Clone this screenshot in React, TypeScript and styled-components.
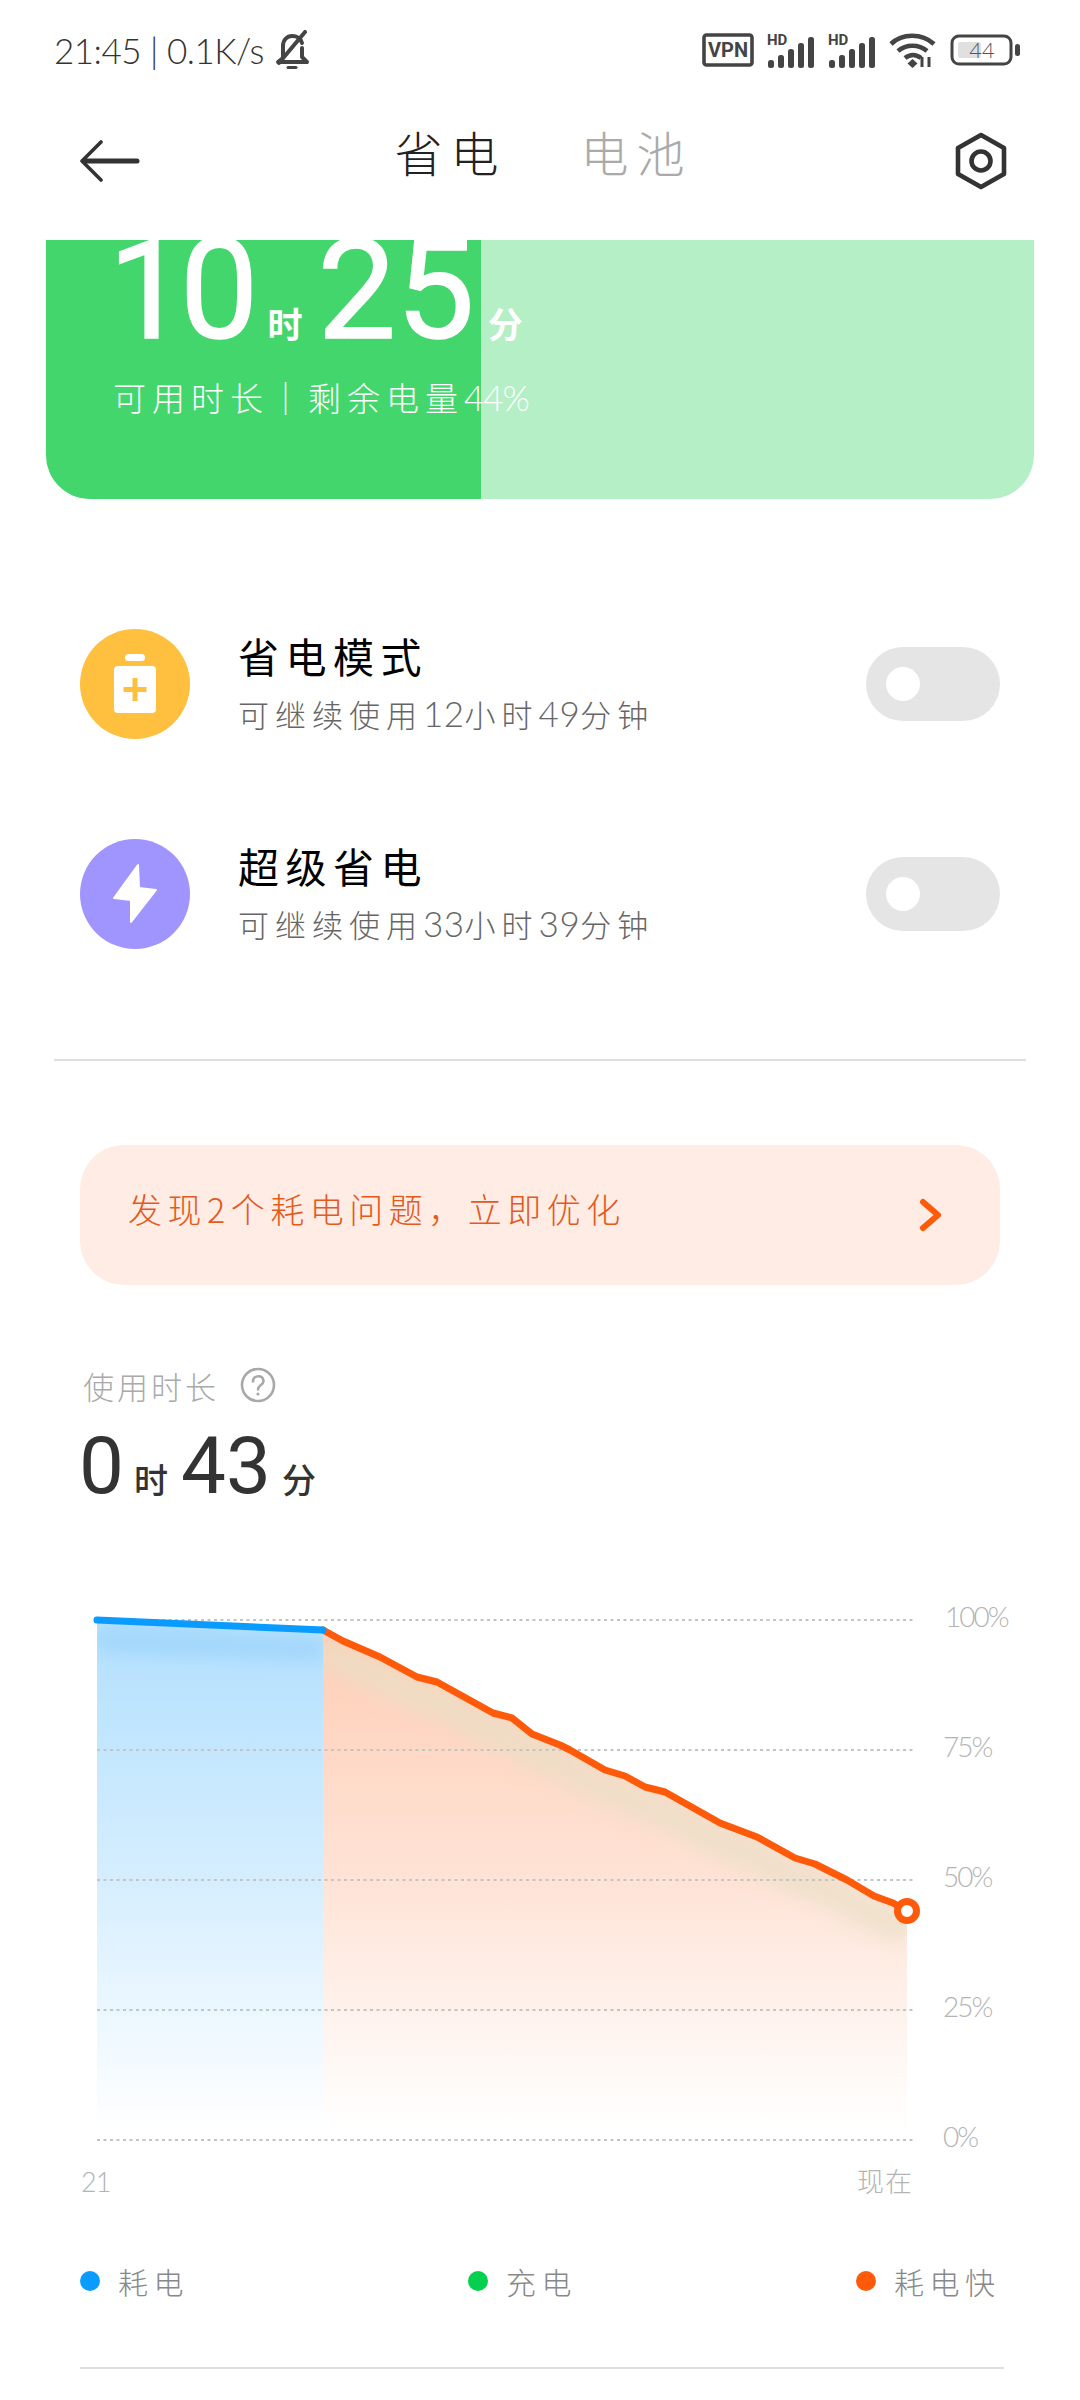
import React from 'react';
import styled, { createGlobalStyle } from 'styled-components';

const CJK = '"Noto Sans CJK SC", "Noto Sans", sans-serif';
const NUM = 'Roboto, "Noto Sans CJK SC", sans-serif';
const THIN = 'Lato, Roboto, "Noto Sans CJK SC", sans-serif';

const GlobalStyle = createGlobalStyle`
  html, body {
    margin: 0;
    padding: 0;
    background: #fff;
  }
  body {
    font-family: ${CJK};
    width: 1080px;
    height: 2400px;
    overflow: hidden;
  }
`;

const Page = styled.div`
  width: 1080px;
  height: 2400px;
  background: #fff;
  overflow: hidden;
`;

const StatusBar = styled.div`
  height: 100px;
  padding: 0 60px 0 54px;
  display: flex;
  align-items: center;
  justify-content: space-between;
  box-sizing: border-box;
`;

const StatusLeft = styled.div`
  display: flex;
  align-items: center;
  gap: 10px;
  font-family: ${THIN};
  font-weight: 300;
  font-size: 35px;
  letter-spacing: -0.5px;
  color: #333;
`;

const StatusRight = styled.div`
  display: flex;
  align-items: center;
  gap: 13px;
`;

const Header = styled.div`
  height: 140px;
  display: grid;
  grid-template-columns: 1fr auto 1fr;
  align-items: center;
  padding: 0 73px 18px 80px;
  box-sizing: border-box;
`;

const Tabs = styled.div`
  display: flex;
  gap: 74px;
  margin-top: -20px;
`;

const Tab = styled.div<{ $active?: boolean }>`
  font-size: 48px;
  font-weight: 300;
  letter-spacing: 8px;
  line-height: 56px;
  color: ${p => (p.$active ? '#222' : '#aaa')};
`;

const HeaderEnd = styled.div`
  display: flex;
  justify-content: flex-end;
`;

const Card = styled.div`
  position: relative;
  height: 259px;
  margin: 0 46px;
  background: #b5efc6;
  border-radius: 0 0 44px 44px;
  overflow: hidden;
`;

const CardFill = styled.div`
  position: absolute;
  left: 0;
  top: 0;
  bottom: 0;
  background: #43d66d;
`;

const CardBody = styled.div`
  position: relative;
  padding: 0 0 0 62px;
  color: #fff;
`;

const BigRow = styled.div`
  display: flex;
  align-items: baseline;
  height: 100px;
  line-height: 100px;
  white-space: nowrap;
`;

const BigNum = styled.span<{ $spacing: number }>`
  font-family: ${NUM};
  font-size: 140px;
  font-weight: 400;
  -webkit-text-stroke: 1.5px #fff;
  letter-spacing: ${p => p.$spacing}px;
`;

const BigUnit = styled.span<{ $left: number; $right: number }>`
  font-size: 35px;
  font-weight: 700;
  margin: 0 ${p => p.$right}px 0 ${p => p.$left}px;
`;

const CardSub = styled.div`
  margin: 35px 0 0 5px;
  font-size: 33px;
  font-weight: 300;
  letter-spacing: 6px;
  line-height: 44px;
  white-space: nowrap;
`;

const Tight = styled.span`
  font-family: ${THIN};
  font-weight: 300;
  font-size: 35px;
  letter-spacing: -1px;
`;

const Modes = styled.div`
  margin-top: 80px;
  padding: 0 80px;
`;

const ModeRow = styled.div`
  height: 210px;
  display: flex;
  align-items: center;
`;

const ModeIcon = styled.div<{ $bg: string }>`
  width: 110px;
  height: 110px;
  border-radius: 50%;
  background: ${p => p.$bg};
  display: flex;
  align-items: center;
  justify-content: center;
  flex: none;
`;

const ModeText = styled.div`
  margin: -4px 0 0 48px;
  flex: 1;
`;

const ModeTitle = styled.div`
  font-size: 41px;
  font-weight: 400;
  letter-spacing: 6.5px;
  line-height: 50px;
  color: #000;
`;

const ModeSub = styled.div`
  margin-top: 13px;
  font-size: 31px;
  font-weight: 300;
  letter-spacing: 6px;
  line-height: 40px;
  color: #666;
`;

const SubNum = styled.span`
  font-family: ${THIN};
  font-weight: 300;
  font-size: 35px;
  letter-spacing: 0.5px;
`;

const Toggle = styled.div`
  width: 134px;
  height: 74px;
  border-radius: 37px;
  background: #e5e5e5;
  display: flex;
  align-items: center;
  padding-left: 20px;
  box-sizing: border-box;
`;

const ToggleThumb = styled.div`
  width: 34px;
  height: 34px;
  border-radius: 50%;
  background: #fff;
`;

const Divider = styled.div<{ $top: number; $left: number; $right: number }>`
  height: 2px;
  margin: ${p => p.$top}px ${p => p.$right}px 0 ${p => p.$left}px;
  background: #dedede;
`;

const Banner = styled.div`
  margin: 84px 80px 0;
  height: 140px;
  border-radius: 44px;
  background: #ffede5;
  display: flex;
  align-items: center;
  justify-content: space-between;
  padding: 0 57px 0 48px;
  box-sizing: border-box;
`;

const BannerText = styled.div`
  font-size: 34px;
  font-weight: 300;
  letter-spacing: 5.5px;
  color: #e4591c;
  margin-top: -14px;
`;

const Usage = styled.div`
  margin-top: 82px;
  padding: 0 83px;
`;

const UsageLabel = styled.div`
  display: flex;
  align-items: center;
  gap: 21px;
  height: 36px;
  font-size: 31px;
  font-weight: 300;
  letter-spacing: 3px;
  color: #aaa;
`;

const UsageValue = styled.div`
  display: flex;
  align-items: baseline;
  margin: 23px 0 0 -4px;
  height: 80px;
  line-height: 80px;
  color: #333;
`;

const UsageNum = styled.span`
  font-family: ${NUM};
  font-size: 80px;
  font-weight: 400;
`;

const UsageUnit = styled.span<{ $left: number; $right: number }>`
  font-size: 34px;
  font-weight: 500;
  margin: 0 ${p => p.$right}px 0 ${p => p.$left}px;
`;

const ChartWrap = styled.div`
  margin-top: 94px;
  height: 600px;
`;

const Legend = styled.div`
  margin-top: 59px;
  padding-left: 80px;
  height: 40px;
  display: grid;
  grid-template-columns: repeat(3, 388px);
`;

const LegendItem = styled.div`
  display: flex;
  align-items: center;
  gap: 18px;
  font-size: 30px;
  font-weight: 300;
  letter-spacing: 5.5px;
  color: #888;
`;

const LegendDot = styled.span<{ $color: string }>`
  width: 20px;
  height: 20px;
  border-radius: 50%;
  background: ${p => p.$color};
  flex: none;
`;

const BellOff = () => (
  <svg width="36" height="40" viewBox="0 0 36 40" fill="none" stroke="#444" strokeWidth="4" strokeLinecap="round" strokeLinejoin="round">
    <path d="M9 27V16C9 10 13 6 18 6s9 3 10 7" />
    <path d="M28 18v9l5 5H4l5-4" />
    <path d="M31 2L5 33" />
    <path d="M14 37.5h8" strokeWidth="3" />
  </svg>
);

const VpnIcon = () => (
  <svg width="52" height="34" viewBox="0 0 52 34">
    <rect x="2" y="2" width="48" height="30" rx="2.5" fill="none" stroke="#444" strokeWidth="3.6" />
    <text x="26" y="24" textAnchor="middle" fontFamily="Roboto, sans-serif" fontWeight="700" fontSize="20" fill="#444">VPN</text>
  </svg>
);

const SignalIcon = () => (
  <svg width="48" height="36" viewBox="0 0 48 36">
    <text x="0" y="13" fontFamily="Roboto, sans-serif" fontWeight="700" fontSize="15" fill="#444">HD</text>
    <rect x="1" y="28" width="6" height="8" rx="2.5" fill="#444" />
    <rect x="11" y="23" width="6" height="13" rx="2.5" fill="#444" />
    <rect x="21" y="17" width="6" height="19" rx="2.5" fill="#444" />
    <rect x="31" y="11" width="6" height="25" rx="2.5" fill="#444" />
    <rect x="41" y="5" width="6" height="31" rx="2.5" fill="#444" />
  </svg>
);

const WifiIcon = () => (
  <svg width="48" height="36" viewBox="0 0 48 36" fill="none" stroke="#444" strokeWidth="4.6">
    <path d="M2 12C13 1 33 1 45 12" />
    <path d="M9 19c8-7 21-7 29 0" />
    <path d="M16 26c5-4 11-4 16 0" />
    <path d="M23.5 27l5 4.5-5 4.5-5-4.5z" fill="#444" stroke="none" />
    <path d="M33 25v10M40 25v10" strokeWidth="3" />
  </svg>
);

const BatteryIcon = () => (
  <svg width="70" height="32" viewBox="0 0 70 32">
    <rect x="2" y="2" width="59" height="28" rx="7" fill="none" stroke="#444" strokeWidth="3" />
    <rect x="8" y="8" width="23" height="16" rx="2" fill="#e0e0e0" />
    <rect x="65" y="10" width="5" height="12" rx="2.5" fill="#444" />
    <text x="32" y="24" textAnchor="middle" fontFamily="Lato, Roboto, sans-serif" fontWeight="300" fontSize="22" fill="#555">44</text>
  </svg>
);

const BackIcon = () => (
  <svg width="60" height="44" viewBox="0 0 60 44" fill="none" stroke="#333" strokeLinecap="round" strokeLinejoin="round">
    <path d="M21 3L2 22l19 19" strokeWidth="3.6" />
    <path d="M4 22h53" strokeWidth="5" />
  </svg>
);

const SettingsIcon = () => (
  <svg width="52" height="58" viewBox="0 0 52 58" fill="none" stroke="#333" strokeWidth="4.6" strokeLinejoin="round">
    <path d="M26 3l23 13v26L26 55 3 42V16z" />
    <circle cx="26" cy="29" r="9.5" />
  </svg>
);

const BottleIcon = () => (
  <svg width="44" height="60" viewBox="0 0 44 60">
    <rect x="12" y="0" width="20" height="7" rx="3.5" fill="#fff" />
    <rect x="1" y="12" width="42" height="47" rx="4" fill="#fff" />
    <path d="M22 24v23M10.5 35.5h23" stroke="#fec03e" strokeWidth="5" />
  </svg>
);

const BoltIcon = () => (
  <svg width="46" height="60" viewBox="0 0 46 60">
    <path d="M26 1L2 34l17 2v22l25-32-17-2z" fill="#fff" stroke="#fff" strokeWidth="2" strokeLinejoin="round" />
  </svg>
);

const Chevron = () => (
  <svg width="24" height="34" viewBox="0 0 24 34" fill="none" stroke="#ff5a0a" strokeWidth="6" strokeLinecap="round" strokeLinejoin="round">
    <path d="M4 4l15 13L4 30" />
  </svg>
);

const HelpIcon = () => (
  <svg width="36" height="36" viewBox="0 0 36 36" fill="none" stroke="#a8a8a8" strokeWidth="2.6">
    <circle cx="18" cy="18" r="16" />
    <path d="M13 14.5c0-7 10.5-7 10.5-.5 0 4-5.5 4-5.5 8.5" strokeLinecap="round" />
    <circle cx="18" cy="27" r="1.6" fill="#a8a8a8" stroke="none" />
  </svg>
);

const BLUE_LINE: [number, number][] = [[97, 1620], [323, 1630]];
const ORANGE_LINE: [number, number][] = [
  [323, 1630], [343, 1641], [380, 1657], [417, 1677], [437, 1682], [493, 1713], [512, 1718],
  [532, 1734], [560, 1745], [570, 1750], [605, 1770], [625, 1776], [645, 1787], [665, 1792],
  [720, 1823], [757, 1837], [795, 1858], [815, 1864], [847, 1880], [874, 1896], [893, 1903], [907, 1911],
];
const toPts = (l: [number, number][]) => l.map(p => p.join(',')).join(' ');
const GRID: { y: number; label: string; x: number }[] = [
  { y: 1620, label: '100%', x: 945 },
  { y: 1750, label: '75%', x: 943 },
  { y: 1880, label: '50%', x: 943 },
  { y: 2010, label: '25%', x: 943 },
  { y: 2140, label: '0%', x: 943 },
];

const Chart = () => (
  <svg width="1080" height="600" viewBox="0 1600 1080 600" style={{ display: 'block' }}>
    <defs>
      <linearGradient id="blueFill" gradientUnits="userSpaceOnUse" x1="0" y1="1630" x2="0" y2="2130">
        <stop offset="0" stopColor="#b4e0fe" />
        <stop offset="0.5" stopColor="#d5eeff" />
        <stop offset="1" stopColor="#ffffff" />
      </linearGradient>
      <linearGradient id="orangeFill" gradientUnits="userSpaceOnUse" x1="0" y1="1630" x2="0" y2="2130">
        <stop offset="0" stopColor="#ffceb6" />
        <stop offset="0.5" stopColor="#fee3d6" />
        <stop offset="1" stopColor="#ffffff" />
      </linearGradient>
      <clipPath id="blueClip">
        <polygon points={`${toPts(BLUE_LINE)} 323,2140 97,2140`} />
      </clipPath>
      <clipPath id="orangeClip">
        <polygon points={`${toPts(ORANGE_LINE)} 907,2140 323,2140`} />
      </clipPath>
      <filter id="soft" filterUnits="userSpaceOnUse" x="0" y="1600" width="1080" height="600">
        <feGaussianBlur stdDeviation="9" />
      </filter>
    </defs>
    <rect x="97" y="1620" width="226" height="520" fill="url(#blueFill)" clipPath="url(#blueClip)" />
    <rect x="323" y="1620" width="584" height="520" fill="url(#orangeFill)" clipPath="url(#orangeClip)" />
    <g clipPath="url(#blueClip)">
      <polyline points="97,1640 323,1650" fill="none" stroke="#a0d6fa" strokeWidth="22" filter="url(#soft)" />
    </g>
    <g clipPath="url(#orangeClip)">
      <polyline
        points={toPts(ORANGE_LINE)}
        transform="translate(0 20)"
        fill="none"
        stroke="#e8dfc6"
        strokeWidth="30"
        opacity="0.7"
        filter="url(#soft)"
      />
    </g>
    {GRID.map(g => (
      <line key={g.y} x1="97" x2="915" y1={g.y} y2={g.y} stroke="#c4c4c4" strokeWidth="2" strokeDasharray="3 3.5" />
    ))}
    {GRID.map(g => (
      <text key={g.label} x={g.x} y={g.y + 7} fontFamily={THIN} fontWeight="300" fontSize="28" fill="#b4b4b4" letterSpacing="-2">
        {g.label}
      </text>
    ))}
    <text x="81" y="2192" fontFamily={THIN} fontWeight="300" fontSize="27" fill="#b4b4b4" letterSpacing="-1">21</text>
    <text x="857" y="2192" fontFamily={CJK} fontWeight="300" fontSize="27" fill="#b4b4b4" letterSpacing="1">现在</text>
    <polyline points={toPts(ORANGE_LINE)} fill="none" stroke="#ff5a0a" strokeWidth="7" strokeLinejoin="round" strokeLinecap="round" />
    <polyline points={toPts(BLUE_LINE)} fill="none" stroke="#0a9bff" strokeWidth="7" strokeLinecap="round" />
    <circle cx="907" cy="1911" r="9.5" fill="#fff" stroke="#ff5a0a" strokeWidth="7" />
  </svg>
);

const MODES = [
  { title: '省电模式', lead: '可继续使用', hours: '12', mins: '49', bg: '#fec03e', icon: <BottleIcon /> },
  { title: '超级省电', lead: '可继续使用', hours: '33', mins: '39', bg: '#a094ff', icon: <BoltIcon /> },
];

const LEGEND = [
  { label: '耗电', color: '#0a9bff' },
  { label: '充电', color: '#05cf4e' },
  { label: '耗电快', color: '#ff5a0a' },
];

const batteryLevel = 44;

export default function App() {
  return (
    <Page>
      <GlobalStyle />
      <StatusBar>
        <StatusLeft>
          <span>21:45 | 0.1K/s</span>
          <BellOff />
        </StatusLeft>
        <StatusRight>
          <VpnIcon />
          <SignalIcon />
          <SignalIcon />
          <WifiIcon />
          <BatteryIcon />
        </StatusRight>
      </StatusBar>

      <Header>
        <BackIcon />
        <Tabs>
          <Tab $active>省电</Tab>
          <Tab>电池</Tab>
        </Tabs>
        <HeaderEnd>
          <SettingsIcon />
        </HeaderEnd>
      </Header>

      <Card>
        <CardFill style={{ width: `${batteryLevel}%` }} />
        <CardBody>
          <BigRow>
            <BigNum $spacing={-7}>10</BigNum>
            <BigUnit $left={16} $right={15}>时</BigUnit>
            <BigNum $spacing={0}>25</BigNum>
            <BigUnit $left={13} $right={0}>分</BigUnit>
          </BigRow>
          <CardSub>
            可用时长｜剩余电量<Tight>{batteryLevel}%</Tight>
          </CardSub>
        </CardBody>
      </Card>

      <Modes>
        {MODES.map(m => (
          <ModeRow key={m.title}>
            <ModeIcon $bg={m.bg}>{m.icon}</ModeIcon>
            <ModeText>
              <ModeTitle>{m.title}</ModeTitle>
              <ModeSub>
                {m.lead}
                <SubNum>{m.hours}</SubNum>小时<SubNum>{m.mins}</SubNum>分钟
              </ModeSub>
            </ModeText>
            <Toggle>
              <ToggleThumb />
            </Toggle>
          </ModeRow>
        ))}
      </Modes>

      <Divider $top={60} $left={54} $right={54} />

      <Banner>
        <BannerText>发现2个耗电问题，立即优化</BannerText>
        <Chevron />
      </Banner>

      <Usage>
        <UsageLabel>
          使用时长
          <HelpIcon />
        </UsageLabel>
        <UsageValue>
          <UsageNum>0</UsageNum>
          <UsageUnit $left={10} $right={13}>时</UsageUnit>
          <UsageNum>43</UsageNum>
          <UsageUnit $left={11} $right={0}>分</UsageUnit>
        </UsageValue>
      </Usage>

      <ChartWrap>
        <Chart />
      </ChartWrap>

      <Legend>
        {LEGEND.map(l => (
          <LegendItem key={l.label}>
            <LegendDot $color={l.color} />
            {l.label}
          </LegendItem>
        ))}
      </Legend>

      <Divider $top={68} $left={80} $right={76} />
    </Page>
  );
}
